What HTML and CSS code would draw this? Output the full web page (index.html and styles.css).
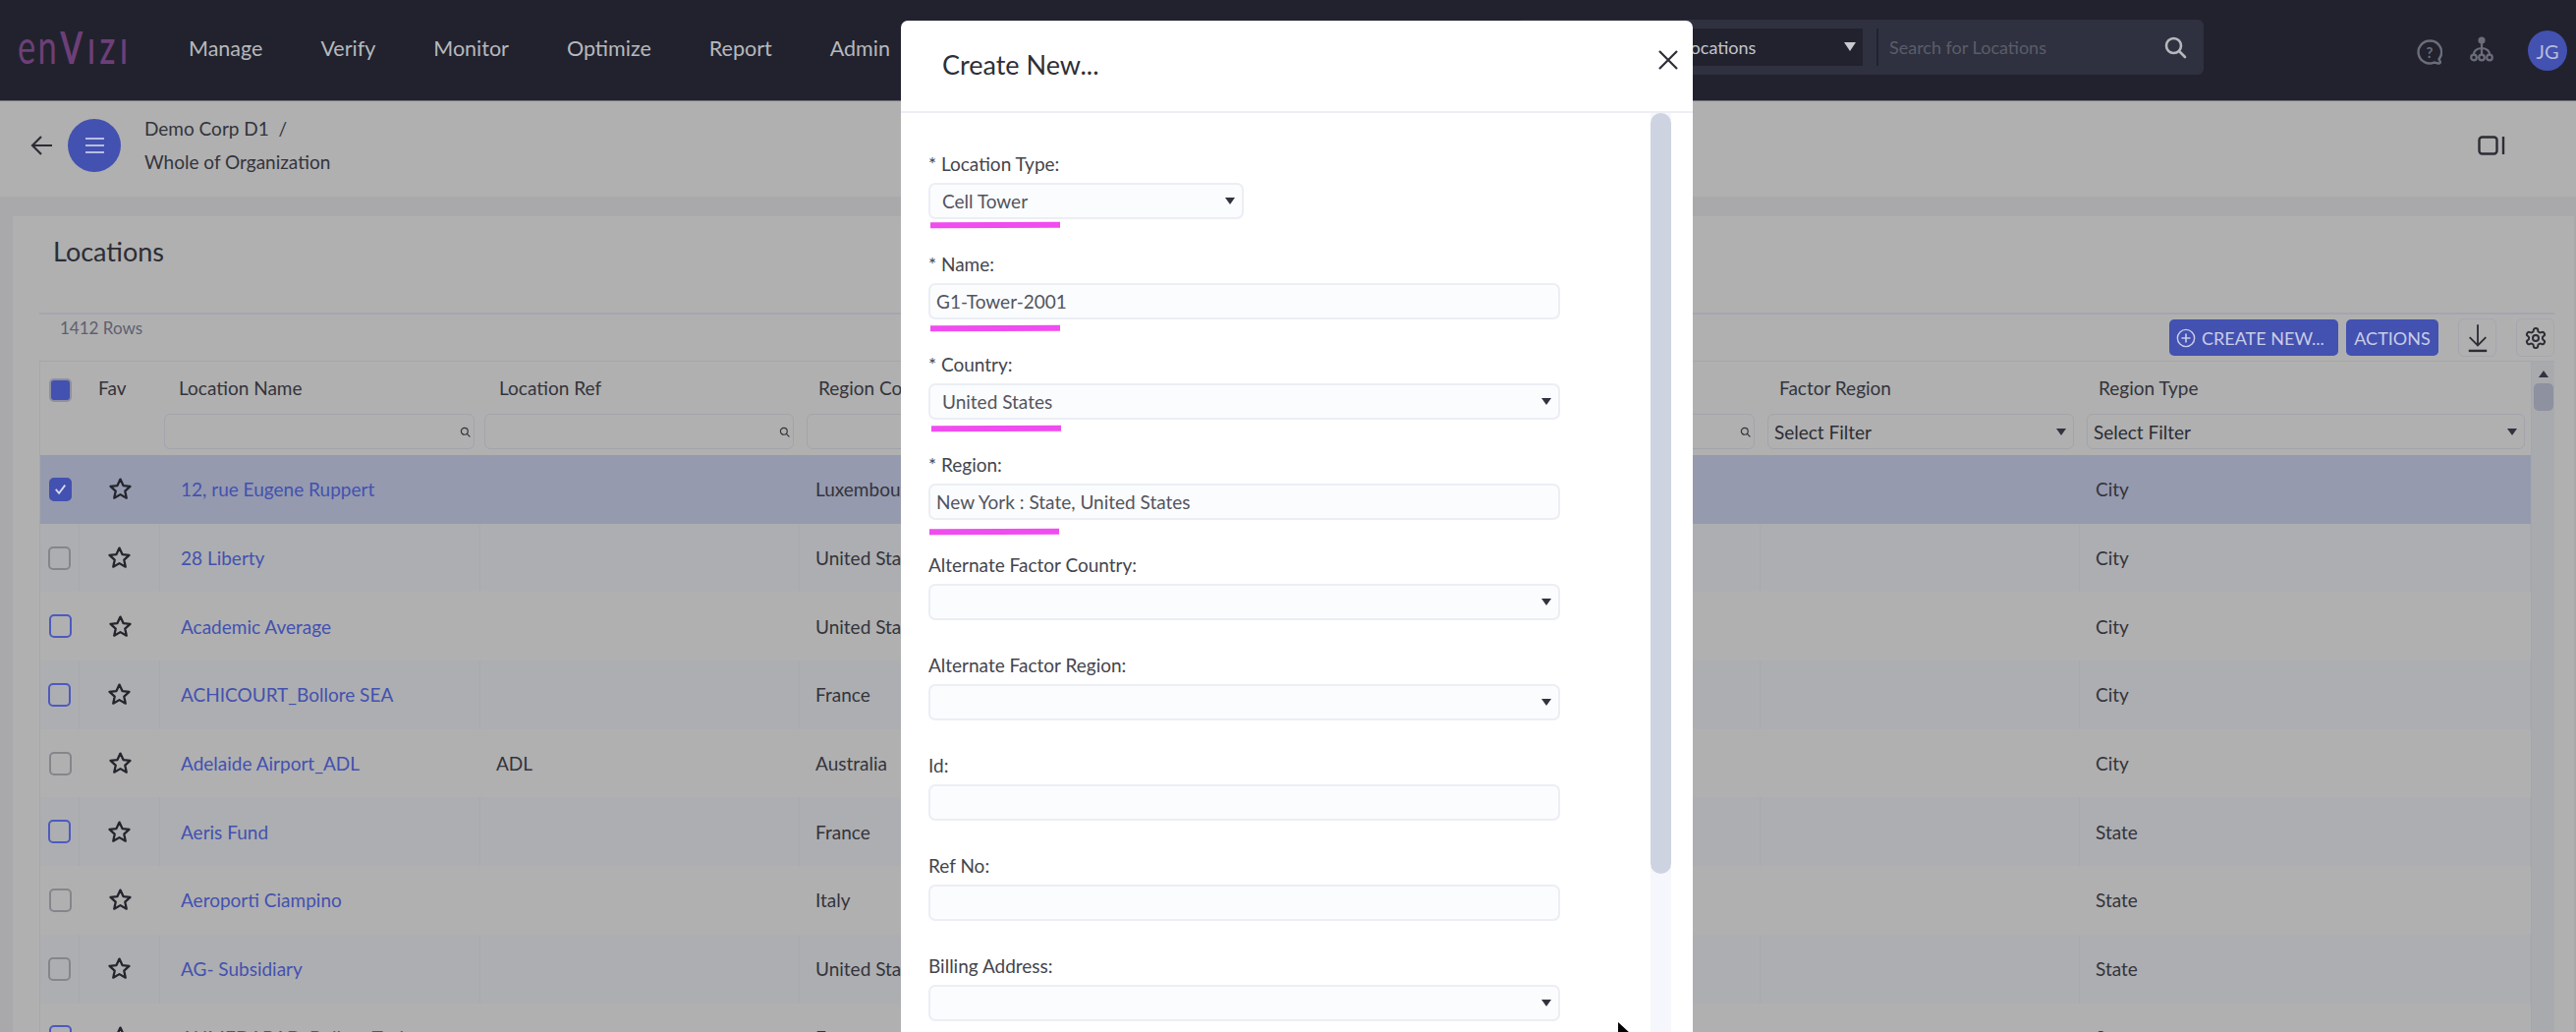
FILE: index.html
```html
<!DOCTYPE html>
<html>

<head>
    <title>Envizi - Locations</title>
    <link rel="stylesheet" href="styles.css">
</head>

<body>
    <svg class="defs" width="0" height="0">
        <symbol id="star" viewBox="0 0 24 24">
            <path d="M12 2.5l2.9 6.2 6.7.8-5 4.6 1.4 6.7-6-3.4-6 3.4 1.4-6.7-5-4.6 6.7-.8z" fill="none" stroke="currentColor" stroke-width="2.2" stroke-linejoin="round" />
        </symbol>
        <symbol id="lens" viewBox="0 0 24 24">
            <circle cx="10.5" cy="10.5" r="7.5" fill="none" stroke="currentColor" stroke-width="2.6" />
            <path d="M16 16l6 6" stroke="currentColor" stroke-width="2.6" stroke-linecap="round" />
        </symbol>
    </svg>

    <header class="topbar">
        <div class="logo">en<span class="logo-v">V</span><span class="logo-rest">IZI</span></div>
        <nav class="mainnav">
            <a>Manage</a>
            <a>Verify</a>
            <a>Monitor</a>
            <a>Optimize</a>
            <a>Report</a>
            <a>Admin</a>
        </nav>
        <div class="search">
            <div class="search-scope"><span>Locations</span><i class="caret caret-light"></i></div>
            <div class="search-input">
                <span>Search for Locations</span>
                <svg class="search-icon"><use href="#lens" /></svg>
            </div>
        </div>
        <svg class="help-icon" viewBox="0 0 26 26">
            <path d="M13 1.5a11.5 11.5 0 1 0 4.5 22.1l4.5.9c1.5.2 2.3-.8 1.7-2l-1.200-2.300A11.500 11.500 0 0 0 13 1.500z" fill="none" stroke="currentColor" stroke-width="2.400" />
            <text x="13" y="18.500" text-anchor="middle" class="help-mark">?</text>
        </svg>
        <svg class="tree-icon" viewBox="0 0 24 26">
            <circle cx="12" cy="4" r="3.600" fill="currentColor" />
            <path d="M12 7v11M12 12c-5 .5-8 3-8 6.500M12 12c5 .5 8 3 8 6.500" fill="none" stroke="currentColor" stroke-width="2.200" />
            <circle cx="4" cy="21.500" r="2.800" fill="none" stroke="currentColor" stroke-width="2.200" />
            <circle cx="12" cy="21.500" r="2.800" fill="none" stroke="currentColor" stroke-width="2.200" />
            <circle cx="20" cy="21.500" r="2.800" fill="none" stroke="currentColor" stroke-width="2.200" />
        </svg>
        <div class="avatar">JG</div>
    </header>

    <section class="crumbbar">
        <svg class="back-icon" viewBox="0 0 24 24">
            <path d="M22 12H3M11 3l-9 9 9 9" fill="none" stroke="currentColor" stroke-width="2.2" />
        </svg>
        <div class="menu-btn"><i></i><i></i><i></i></div>
        <div class="crumbs">
            <div>Demo Corp D1 &nbsp;/</div>
            <div>Whole of Organization</div>
        </div>
        <svg class="panel-icon" viewBox="0 0 28 20">
            <rect x="1.5" y="1.5" width="18" height="17" rx="3" fill="none" stroke="currentColor" stroke-width="2.4" />
            <path d="M26 1v18" stroke="currentColor" stroke-width="2.4" />
        </svg>
    </section>

    <main class="card">
        <h2 class="card-title">Locations</h2>
        <div class="toolbar">
            <span class="rowcount">1412 Rows</span>
            <button class="btn btn-create">
                <svg viewBox="0 0 22 22">
                    <circle cx="11" cy="11" r="9.5" fill="none" stroke="currentColor" stroke-width="1.6" />
                    <path d="M11 6v10M6 11h10" stroke="currentColor" stroke-width="1.8" />
                </svg>
                CREATE NEW...
            </button>
            <button class="btn btn-actions">ACTIONS</button>
            <div class="toolbtn">
                <svg viewBox="0 0 26 32">
                    <path d="M13 1v23M4 15l9 9 9-9" fill="none" stroke="currentColor" stroke-width="2" />
                    <path d="M3 30h20" stroke="currentColor" stroke-width="2.6" />
                </svg>
            </div>
            <div class="toolbtn toolbtn-gear">
                <svg viewBox="0 0 24 24">
                    <path d="M12.22 2h-.44a2 2 0 0 0-2 2v.18a2 2 0 0 1-1 1.73l-.43.25a2 2 0 0 1-2 0l-.15-.08a2 2 0 0 0-2.73.73l-.22.38a2 2 0 0 0 .73 2.73l.15.1a2 2 0 0 1 1 1.72v.51a2 2 0 0 1-1 1.74l-.15.09a2 2 0 0 0-.73 2.73l.22.38a2 2 0 0 0 2.73.73l.15-.08a2 2 0 0 1 2 0l.43.25a2 2 0 0 1 1 1.73V20a2 2 0 0 0 2 2h.44a2 2 0 0 0 2-2v-.18a2 2 0 0 1 1-1.73l.43-.25a2 2 0 0 1 2 0l.15.08a2 2 0 0 0 2.73-.73l.22-.39a2 2 0 0 0-.73-2.73l-.15-.08a2 2 0 0 1-1-1.74v-.5a2 2 0 0 1 1-1.74l.15-.09a2 2 0 0 0 .73-2.73l-.22-.38a2 2 0 0 0-2.73-.73l-.15.08a2 2 0 0 1-2 0l-.43-.25a2 2 0 0 1-1-1.73V4a2 2 0 0 0-2-2z" fill="none" stroke="currentColor" stroke-width="2" />
                    <circle cx="12" cy="12" r="3" fill="none" stroke="currentColor" stroke-width="2" />
                </svg>
            </div>
        </div>

        <div class="table">
            <div class="table-main">
                <div class="grid headrow">
                    <div class="cell-check"><span class="box box-all"></span></div>
                    <div class="th th-fav">Fav</div>
                    <div class="th">Location Name</div>
                    <div class="th">Location Ref</div>
                    <div class="th">Region Country</div>
                    <div class="th">Location Type</div>
                    <div class="th">Factor Country</div>
                    <div class="th">Factor Region</div>
                    <div class="th">Region Type</div>
                </div>
                <div class="grid filterrow">
                    <div></div>
                    <div></div>
                    <div class="filter"><svg class="filter-lens"><use href="#lens" /></svg></div>
                    <div class="filter"><svg class="filter-lens"><use href="#lens" /></svg></div>
                    <div class="filter filter-inset"><svg class="filter-lens"><use href="#lens" /></svg></div>
                    <div class="filter"><svg class="filter-lens"><use href="#lens" /></svg></div>
                    <div class="filter"><svg class="filter-lens"><use href="#lens" /></svg></div>
                    <div class="filter filter-inset filter-select"><span>Select Filter</span><i class="caret"></i></div>
                    <div class="filter filter-inset filter-select"><span>Select Filter</span><i class="caret"></i></div>
                </div>

                <div class="grid row row-selected">
                    <div class="cell-check"><span class="box box-on"><svg viewBox="0 0 20 20"><path d="M5 10.5l3.5 4L15 6" fill="none" stroke="currentColor" stroke-width="2" /></svg></span></div>
                    <div class="cell-fav"><svg class="star"><use href="#star" /></svg></div>
                    <div class="td"><a>12, rue Eugene Ruppert</a></div>
                    <div class="td"></div>
                    <div class="td">Luxembourg</div>
                    <div class="td"></div><div class="td"></div><div class="td"></div>
                    <div class="td">City</div>
                </div>
                <div class="grid row row-alt">
                    <div class="cell-check"><span class="box"></span></div>
                    <div class="cell-fav"><svg class="star"><use href="#star" /></svg></div>
                    <div class="td"><a>28 Liberty</a></div>
                    <div class="td"></div>
                    <div class="td">United States</div>
                    <div class="td"></div><div class="td"></div><div class="td"></div>
                    <div class="td">City</div>
                </div>
                <div class="grid row">
                    <div class="cell-check"><span class="box box-blue"></span></div>
                    <div class="cell-fav"><svg class="star"><use href="#star" /></svg></div>
                    <div class="td"><a>Academic Average</a></div>
                    <div class="td"></div>
                    <div class="td">United States</div>
                    <div class="td"></div><div class="td"></div><div class="td"></div>
                    <div class="td">City</div>
                </div>
                <div class="grid row row-alt">
                    <div class="cell-check"><span class="box box-blue"></span></div>
                    <div class="cell-fav"><svg class="star"><use href="#star" /></svg></div>
                    <div class="td"><a>ACHICOURT_Bollore SEA</a></div>
                    <div class="td"></div>
                    <div class="td">France</div>
                    <div class="td"></div><div class="td"></div><div class="td"></div>
                    <div class="td">City</div>
                </div>
                <div class="grid row">
                    <div class="cell-check"><span class="box"></span></div>
                    <div class="cell-fav"><svg class="star"><use href="#star" /></svg></div>
                    <div class="td"><a>Adelaide Airport_ADL</a></div>
                    <div class="td">ADL</div>
                    <div class="td">Australia</div>
                    <div class="td"></div><div class="td"></div><div class="td"></div>
                    <div class="td">City</div>
                </div>
                <div class="grid row row-alt">
                    <div class="cell-check"><span class="box box-blue"></span></div>
                    <div class="cell-fav"><svg class="star"><use href="#star" /></svg></div>
                    <div class="td"><a>Aeris Fund</a></div>
                    <div class="td"></div>
                    <div class="td">France</div>
                    <div class="td"></div><div class="td"></div><div class="td"></div>
                    <div class="td">State</div>
                </div>
                <div class="grid row">
                    <div class="cell-check"><span class="box"></span></div>
                    <div class="cell-fav"><svg class="star"><use href="#star" /></svg></div>
                    <div class="td"><a>Aeroporti Ciampino</a></div>
                    <div class="td"></div>
                    <div class="td">Italy</div>
                    <div class="td"></div><div class="td"></div><div class="td"></div>
                    <div class="td">State</div>
                </div>
                <div class="grid row row-alt">
                    <div class="cell-check"><span class="box"></span></div>
                    <div class="cell-fav"><svg class="star"><use href="#star" /></svg></div>
                    <div class="td"><a>AG- Subsidiary</a></div>
                    <div class="td"></div>
                    <div class="td">United States</div>
                    <div class="td"></div><div class="td"></div><div class="td"></div>
                    <div class="td">State</div>
                </div>
                <div class="grid row">
                    <div class="cell-check"><span class="box box-blue"></span></div>
                    <div class="cell-fav"><svg class="star"><use href="#star" /></svg></div>
                    <div class="td"><a>AHMEDABAD_Bollore Tech</a></div>
                    <div class="td"></div>
                    <div class="td">France</div>
                    <div class="td"></div><div class="td"></div><div class="td"></div>
                    <div class="td">State</div>
                </div>
            </div>
            <div class="table-scroll">
                <i class="scroll-up"></i>
                <div class="scroll-thumb"></div>
            </div>
        </div>
    </main>

    <!-- Dialog sits over the page -->
    <div class="modal">
        <div class="modal-head">
            <h3>Create New...</h3>
            <svg class="modal-close" viewBox="0 0 22 22">
                <path d="M2 2l18 18M20 2L2 20" stroke="currentColor" stroke-width="2.2" />
            </svg>
        </div>
        <div class="modal-body">
            <form class="form">
                <div class="group">
                    <label>* Location Type:</label>
                    <div class="field field-select field-short"><span>Cell Tower</span><i class="caret"></i></div>
                    <i class="mark mark-type"></i>
                </div>
                <div class="group">
                    <label>* Name:</label>
                    <input class="field" type="text" value="G1-Tower-2001">
                    <i class="mark mark-name"></i>
                </div>
                <div class="group">
                    <label>* Country:</label>
                    <div class="field field-select"><span>United States</span><i class="caret"></i></div>
                    <i class="mark mark-country"></i>
                </div>
                <div class="group">
                    <label>* Region:</label>
                    <input class="field" type="text" value="New York : State, United States">
                    <i class="mark mark-region"></i>
                </div>
                <div class="group">
                    <label>Alternate Factor Country:</label>
                    <div class="field field-select"><span></span><i class="caret"></i></div>
                </div>
                <div class="group">
                    <label>Alternate Factor Region:</label>
                    <div class="field field-select"><span></span><i class="caret"></i></div>
                </div>
                <div class="group">
                    <label>Id:</label>
                    <input class="field" type="text">
                </div>
                <div class="group">
                    <label>Ref No:</label>
                    <input class="field" type="text">
                </div>
                <div class="group">
                    <label>Billing Address:</label>
                    <div class="field field-select"><span></span><i class="caret"></i></div>
                </div>
            </form>
            <div class="modal-scroll">
                <div class="modal-thumb"></div>
            </div>
        </div>
    </div>

    <svg class="pointer" viewBox="0 0 14 20">
        <path d="M1 0v17l4-4 3 7 3-1-3-7h6z" fill="#000" />
    </svg>
</body>

</html>
```

FILE: styles.css
```css
:root {
    --header-bg: #21222e;
    --page-bg: #b0b0b0;
    --band-bg: #a9a9ab;
    --row-alt: #adaeb1;
    --row-selected: #959aae;
    --line: #a6a7ae;
    --text: #2c2d35;
    --link: #4351b0;
    --blue: #4351b0;
    --field-bg: #fbfcfe;
    --field-line: #eceef4;
    --pink: #f04cf0;
}

* {
    box-sizing: border-box;
}

body {
    margin: 0;
    width: 2622px;
    height: 1050px;
    overflow: hidden;
    position: relative;
    font-family: Lato, "Noto Sans", sans-serif;
    font-size: 19px;
    color: var(--text);
    background-color: var(--band-bg);
}

.defs {
    position: absolute;
}

.caret {
    display: block;
    flex: none;
    width: 0;
    height: 0;
    border-left: 5px solid transparent;
    border-right: 5px solid transparent;
    border-top: 7px solid #32333f;
}

.caret-light {
    border-left-width: 6px;
    border-right-width: 6px;
    border-top: 9px solid #c9cad0;
}

/* Top bar */
.topbar {
    height: 103px;
    background-color: var(--header-bg);
    border-bottom: 1px solid #6f7078;
    display: flex;
    align-items: center;
    padding-left: 18px;
}

.logo {
    width: 112px;
    flex: none;
    font-size: 48px;
    line-height: 1;
    letter-spacing: 3px;
    color: #6d3f78;
    margin-top: -8px;
    white-space: nowrap;
    transform: scaleX(0.72);
    transform-origin: left center;
}

.logo-v {
    font-size: 46px;
    margin-left: 2px;
    font-weight: 700;
}

.logo-rest {
    font-size: 35px;
    letter-spacing: 7px;
    margin-left: 4px;
    font-weight: 700;
}

.mainnav {
    display: flex;
    gap: 59px;
    margin-left: 62px;
    color: #b7b8bc;
    font-size: 21.5px;
    margin-top: -4px;
}

.search {
    width: 700px;
    height: 56px;
    margin-left: auto;
    margin-right: 379px;
    margin-bottom: 7px;
    display: flex;
    align-items: center;
    flex: none;
    background-color: #2f3140;
    border-radius: 6px;
    padding-left: 18px;
    font-size: 18px;
}

.search-scope {
    width: 335px;
    height: 38px;
    flex: none;
    background-color: var(--header-bg);
    color: #c4c5ca;
    display: flex;
    align-items: center;
    justify-content: space-between;
    padding: 0 7px 0 151px;
}

.search-input {
    flex: 1;
    height: 38px;
    margin-left: 14px;
    border-left: 2px solid var(--header-bg);
    display: flex;
    align-items: center;
    justify-content: space-between;
    padding: 0 17px 0 11px;
    color: #5b5d68;
}

.search-icon {
    width: 24px;
    height: 24px;
    color: #b7b8bc;
}

.help-icon {
    position: absolute;
    left: 2460px;
    top: 40px;
    width: 26px;
    height: 26px;
    color: #6b6e7a;
}

.help-mark {
    font-size: 15px;
    font-weight: 700;
    fill: currentColor;
}

.tree-icon {
    position: absolute;
    left: 2514px;
    top: 37px;
    width: 24px;
    height: 26px;
    color: #6b6e7a;
}

.avatar {
    position: absolute;
    left: 2573px;
    top: 31px;
    width: 40px;
    height: 41px;
    border-radius: 50%;
    background-color: var(--blue);
    color: #b8bcdc;
    font-size: 20px;
    display: flex;
    align-items: center;
    justify-content: center;
}

/* Breadcrumb bar */
.crumbbar {
    height: 97px;
    background-color: var(--page-bg);
    display: flex;
    align-items: center;
    padding: 0 72px 8px 31px;
}

.back-icon {
    width: 24px;
    height: 24px;
    flex: none;
}

.menu-btn {
    width: 54px;
    height: 54px;
    margin-left: 14px;
    flex: none;
    border-radius: 50%;
    background-color: var(--blue);
    display: flex;
    flex-direction: column;
    align-items: center;
    justify-content: center;
    gap: 5px;
}

.menu-btn i {
    display: block;
    width: 19px;
    height: 2px;
    background-color: #b9bde0;
}

.crumbs {
    margin-left: 24px;
    line-height: 34px;
    color: #33343c;
}

.panel-icon {
    width: 28px;
    height: 20px;
    margin-left: auto;
    color: #2c2d35;
}

/* Card */
.card {
    margin: 20px 2px 0 13px;
    height: 840px;
    background-color: var(--page-bg);
    padding: 0 20px 0 27px;
}

.card-title {
    margin: 0;
    padding-left: 14px;
    height: 98px;
    line-height: 72px;
    font-size: 27px;
    font-weight: 400;
    color: #2c2d35;
}

.toolbar {
    height: 49px;
    border-top: 2px solid #a4a5b0;
    display: flex;
    align-items: center;
    gap: 8px;
}

.rowcount {
    margin-left: 21px;
    margin-right: auto;
    align-self: flex-start;
    margin-top: 3px;
    font-size: 17px;
    color: #5d6070;
}

.btn {
    height: 37px;
    border: 0;
    border-radius: 5px;
    background-color: var(--blue);
    color: #c9cce8;
    font-family: Lato, "Noto Sans", sans-serif;
    font-size: 18px;
    display: flex;
    align-items: center;
    padding: 0;
}

.btn-create {
    width: 172px;
    gap: 6px;
    padding-left: 7px;
    white-space: nowrap;
}

.btn-create svg {
    width: 20px;
    height: 22px;
    flex: none;
}

.btn-actions {
    width: 94px;
    justify-content: center;
}

.toolbtn {
    width: 39px;
    height: 39px;
    margin-left: 12px;
    border: 1px solid #a6a7ae;
    border-radius: 6px;
    display: flex;
    align-items: center;
    justify-content: center;
}

.toolbtn svg {
    width: 24px;
    height: 30px;
}

/* Table */
.table {
    display: flex;
    height: 700px;
    border-top: 1px solid var(--line);
    border-left: 1px solid var(--line);
    overflow: hidden;
}

.table-main {
    width: 2535px;
    flex: none;
}

.table-scroll {
    flex: 1;
    border-left: 1px solid var(--line);
    background-color: #a9aaae;
    display: flex;
    flex-direction: column;
    align-items: center;
    padding-top: 9px;
}

.scroll-up {
    display: block;
    width: 0;
    height: 0;
    border-left: 5px solid transparent;
    border-right: 5px solid transparent;
    border-bottom: 7px solid #32333f;
}

.scroll-thumb {
    width: 20px;
    height: 28px;
    margin-top: 6px;
    border-radius: 5px;
    background-color: #8e91a0;
}

.grid {
    display: grid;
    grid-template-columns: 40px 82px 326px 325px 326px 326px 326px 325px 459px;
}

.headrow {
    height: 53px;
}

.cell-check {
    display: flex;
    align-items: center;
    justify-content: center;
}

.headrow .cell-check {
    align-items: flex-start;
    padding-top: 17px;
}

.box {
    display: block;
    width: 23px;
    height: 24px;
    border: 2px solid #85868c;
    border-radius: 5px;
    color: #d6d8ee;
}

.box svg {
    display: block;
}

.box-blue {
    border-color: #4d5ac0;
}

.box-all {
    background-color: var(--blue);
    border-color: #8f90a0;
}

.box-on {
    background-color: var(--blue);
    border-color: var(--blue);
}

.th {
    padding: 15px 0 0 19px;
    line-height: 24px;
    color: #33343c;
    white-space: nowrap;
}

.filterrow {
    height: 42px;
}

.filter {
    height: 36px;
    margin: 0 6px 0 4px;
    border: 1px solid #a3a4ac;
    border-radius: 6px;
    display: flex;
    align-items: center;
    justify-content: flex-end;
    padding: 0 3px 0 6px;
}

.filter-inset {
    margin-left: 7px;
}

.filter-lens {
    width: 11px;
    height: 13px;
    color: #33343c;
}

.filter-select {
    justify-content: space-between;
    padding-right: 7px;
}

.row {
    height: 69.7px;
    background-color: var(--page-bg);
}

.row-alt {
    background-color: var(--row-alt);
}

.row-selected {
    background-color: var(--row-selected);
}

.cell-fav {
    display: flex;
    align-items: center;
    justify-content: center;
}

.star {
    width: 25px;
    height: 25px;
    color: #24252d;
}

.td {
    display: flex;
    align-items: center;
    padding-left: 16px;
    white-space: nowrap;
    overflow: hidden;
    color: #33343c;
}

.row-alt .td,
.row-alt .cell-fav,
.row-alt .cell-check {
    border-right: 1px solid #a9aaae;
}

.td a {
    margin-left: 5px;
    color: var(--link);
}

/* Modal */
.modal {
    position: absolute;
    left: 917px;
    top: 21px;
    width: 806px;
    height: 1029px;
    background-color: #fff;
    border-radius: 7px 7px 0 0;
}

.modal-head {
    height: 94px;
    border-bottom: 2px solid #eceef3;
    display: flex;
    align-items: center;
    justify-content: space-between;
    padding: 0 14px 4px 42px;
}

.modal-head h3 {
    margin: 0;
    font-size: 27px;
    font-weight: 400;
    color: #2e2f37;
}

.modal-close {
    width: 22px;
    height: 22px;
    color: #2e2f37;
    margin-top: -9px;
}

.modal-body {
    display: flex;
    height: 935px;
}

.form {
    width: 763px;
    flex: none;
    padding: 36px 0 0 28px;
}

.group {
    position: relative;
    height: 102px;
    padding-top: 1px;
}

.group label {
    display: block;
    height: 34px;
    line-height: 30px;
    color: #44454d;
}

.field {
    display: flex;
    align-items: center;
    width: 643px;
    height: 37px;
    padding: 0 6px;
    background-color: var(--field-bg);
    border: 2px solid var(--field-line);
    border-radius: 7px;
    color: #53545d;
    font-family: Lato, "Noto Sans", sans-serif;
    font-size: 19px;
    outline: none;
}

.field-select {
    justify-content: space-between;
    padding: 0 7px 0 12px;
}

.field-short {
    width: 321px;
}

.mark {
    position: absolute;
    display: block;
    height: 6px;
    width: 132px;
    background-color: var(--pink);
    transform: rotate(-0.3deg);
}

.mark-type {
    left: 2px;
    top: 75px;
}

.mark-name {
    left: 2px;
    top: 78px;
}

.mark-country {
    left: 3px;
    top: 78px;
}

.mark-region {
    left: 1px;
    top: 81px;
}

.modal-scroll {
    width: 21px;
    flex: none;
    background-color: #f6f7fc;
}

.modal-thumb {
    height: 774px;
    border-radius: 11px;
    background-color: #ced3e1;
}

.pointer {
    position: absolute;
    left: 1646px;
    top: 1040px;
    width: 14px;
    height: 20px;
}
```
